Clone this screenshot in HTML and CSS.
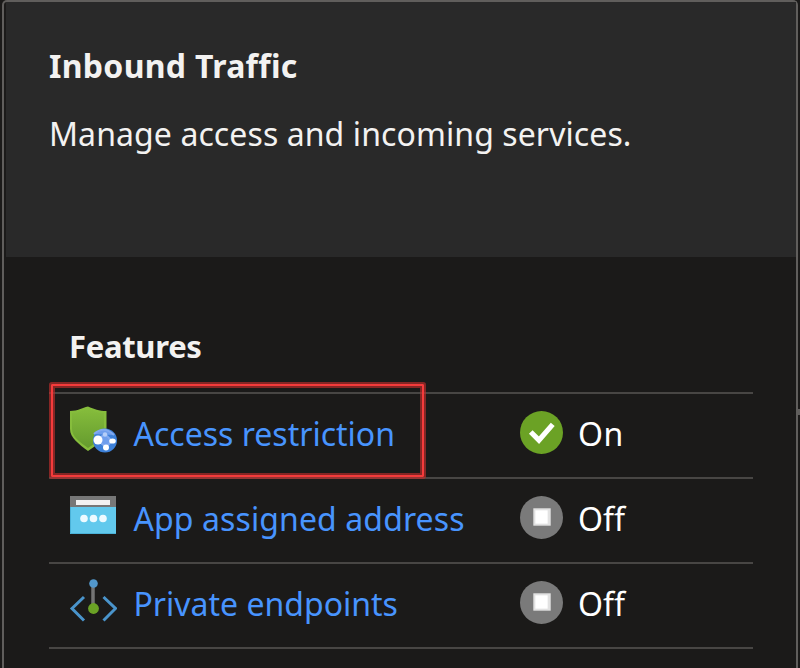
FILE: index.html
```html
<!DOCTYPE html>
<html lang="en">
<head>
<meta charset="utf-8">
<title>Inbound Traffic</title>
<link rel="stylesheet" href="styles.css">
</head>
<body>
<main class="card">
  <header class="card-header">
    <h1 class="title">Inbound Traffic</h1>
    <p class="description">Manage access and incoming services.</p>
  </header>
  <section class="features">
    <h2 class="features-title">Features</h2>
    <ul class="list">
      <li class="row">
        <svg class="icon" viewBox="0 0 48 48">
          <defs><linearGradient id="shield" x1="0" y1="0" x2="0" y2="1"><stop offset="0" stop-color="#86bd3c"/><stop offset="1" stop-color="#659b2e"/></linearGradient></defs>
          <path d="M1 5C9 5 13 2 19 .5C25 3 30 5 37.500 5V23C37 33 28 39 19 45C10 38 1 32 1 23Z" fill="#86bd3c"/>
          <path d="M3 7C10 7 14 4 19 2C24 5 29 7 35 7V23C35 31 27 37 19 42C11 36 3 31 3 23Z" fill="url(#shield)"/>
          <circle cx="36" cy="34.500" r="12" fill="#3d80d8"/>
          <path d="M25 28Q35 19 45 29M28 34L36 28L43 35L37 41Z" fill="#6f9eed" stroke="#82aaf0" stroke-width="2"/>
          <circle cx="29" cy="34" r="4.500" fill="#fff"/>
          <circle cx="36" cy="28.500" r="2.200" fill="#b5cef8"/>
          <ellipse cx="43.500" cy="35" rx="3.300" ry="2.600" fill="#fff"/>
          <circle cx="37" cy="41.500" r="3" fill="#fff"/>
        </svg>
        <a class="name">Access restriction</a>
        <svg class="status" viewBox="0 0 42 42"><circle cx="21" cy="21" r="21" fill="#6ba225"/><path d="M10.500 20.500L18.500 28.500L32 13" fill="none" stroke="#fff" stroke-width="5"/></svg>
        <span class="state on">On</span>
        <span class="highlight"></span>
      </li>
      <li class="row">
        <svg class="icon" viewBox="0 0 48 48">
          <path d="M1 5H47V17H1Z" fill="#777"/>
          <path d="M1 16H47V43H1Z" fill="#62c9ed"/>
          <path d="M1.500 16V42.500H47" fill="none" stroke="#4bb2d8"/>
          <path d="M7 9H41V14H7Z" fill="#f2f2f2"/>
          <circle cx="15" cy="27.500" r="3.800" fill="#eefaff"/><circle cx="24.500" cy="27.500" r="3.800" fill="#eefaff"/><circle cx="34" cy="27.500" r="3.800" fill="#eefaff"/>
        </svg>
        <a class="name wide">App assigned address</a>
        <svg class="status" viewBox="0 0 42 42"><circle cx="21" cy="21" r="21" fill="#7a7a7a"/><path d="M13 12H30V29H13Z" fill="#e2e2e2"/><path d="M15 14H27V27H15Z" fill="#fff"/></svg>
        <span class="state off">Off</span>
      </li>
      <li class="row">
        <svg class="icon" viewBox="0 0 48 48">
          <path d="M15 21L3 32.500L15 44.500M34.500 21L46.500 32.500L34.500 44.500" fill="none" stroke="#4a94cb" stroke-width="3"/>
          <path d="M24 10V30" stroke="#747474" stroke-width="3.500"/>
          <circle cx="24.500" cy="7.500" r="4.300" fill="#5297cb"/><circle cx="24.500" cy="32.500" r="5.400" fill="#6ba225"/>
        </svg>
        <a class="name">Private endpoints</a>
        <svg class="status" viewBox="0 0 42 42"><circle cx="21" cy="21" r="21" fill="#7a7a7a"/><path d="M13 12H30V29H13Z" fill="#e2e2e2"/><path d="M15 14H27V27H15Z" fill="#fff"/></svg>
        <span class="state off">Off</span>
      </li>
    </ul>
  </section>
  <span class="connector"></span>
</main>
</body>
</html>
```
FILE: styles.css
```css
* { box-sizing: border-box; }
html { overflow: hidden; background: #1b1a19; }
body {
  margin: 0;
  height: 668px;
  overflow: hidden;
  background: #1b1a19;
  color: #f3f2f1;
  font: 32px/44px "Noto Sans", "Open Sans", sans-serif;
}
.card {
  position: relative;
  height: 680px;
  margin: 0 2px;
  padding: 0 0 0 2px;
  border: 2px solid #605e5c;
  border-bottom: 0;
  border-radius: 5px 5px 0 0;
  background: #1b1a19;
}
.card-header {
  height: 255px;
  padding: 42px 0 0 43px;
  background: #292929;
}
h1, h2, p { margin: 0; white-space: nowrap; }
h1, h2 { font-size: 31px; font-weight: 700; }
.title { font-size: 32px; letter-spacing: 0.3px; }
.description { margin-top: 24px; letter-spacing: 0.09px; }
.features { padding: 67px 43px 0; }
.features-title { padding-left: 20px; letter-spacing: -0.3px; }
.list {
  width: 704px;
  margin: 24px 0 0;
  padding: 0;
  border-top: 2px solid #484644;
  list-style: none;
}
.row {
  position: relative;
  display: grid;
  grid-template-columns: 48px 386px 42px auto;
  align-items: center;
  height: 85px;
  padding: 0 0 4px 21px;
  border-bottom: 2px solid #484644;
  white-space: nowrap;
}
.icon { display: block; width: 48px; height: 48px; margin: -7px 0 0 -1px; }
.status { display: block; width: 43px; height: 43px; margin: -2px 0 0 15.5px; }
.name { margin-left: 15.5px; color: #4894fe; }
.wide { letter-spacing: 0.1px; }
.state { margin-left: 32px; color: #fff; }
.on { letter-spacing: 0.5px; }
.highlight {
  position: absolute;
  top: -10px;
  left: 2px;
  width: 373px;
  height: 93px;
  border: 2px solid #f53b3b;
  border-radius: 1px;
  box-shadow: 0 0 0 2px rgba(190, 45, 45, .65), inset 0 0 0 2px rgba(190, 45, 45, .65);
}
.connector {
  position: absolute;
  top: 407px;
  right: -4px;
  width: 2px;
  height: 6px;
  background: #605e5c;
}
```
